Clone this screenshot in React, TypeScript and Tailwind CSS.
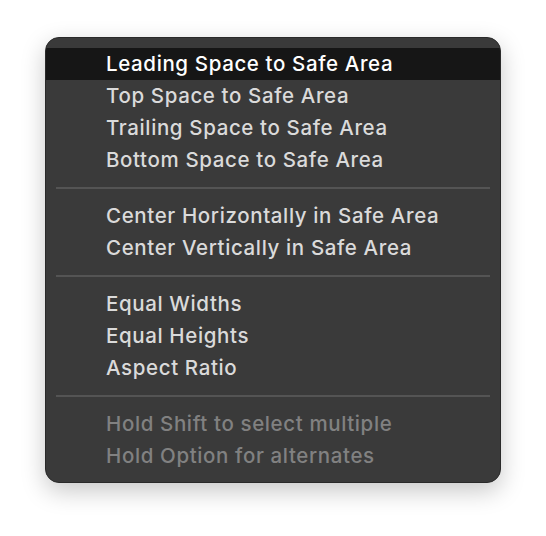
const groups: { label: string; active?: boolean; disabled?: boolean }[][] = [
  [
    { label: "Leading Space to Safe Area", active: true },
    { label: "Top Space to Safe Area" },
    { label: "Trailing Space to Safe Area" },
    { label: "Bottom Space to Safe Area" },
  ],
  [
    { label: "Center Horizontally in Safe Area" },
    { label: "Center Vertically in Safe Area" },
  ],
  [{ label: "Equal Widths" }, { label: "Equal Heights" }, { label: "Aspect Ratio" }],
  [
    { label: "Hold Shift to select multiple", disabled: true },
    { label: "Hold Option for alternates", disabled: true },
  ],
];

const App = () => {
  return (
    <div className="w-[546px] h-[536px] bg-white pt-[37px] pl-[45px]">
      <div
        className="w-[456px] rounded-[14px] bg-[#3a3a3a] border border-[#2a2a2a] pt-[10px] pb-[10px] shadow-[0_8px_24px_rgba(0,0,0,0.22)] overflow-hidden"
        style={{ fontFamily: "Inter, 'Liberation Sans', sans-serif" }}
      >
        {groups.map((group, gi) => (
          <div key={gi}>
            {gi > 0 && (
              <div className="h-[24px] flex items-center px-[10px]">
                <div className="h-[2px] w-full bg-[#545454]" />
              </div>
            )}
            {group.map((item) => (
              <div
                key={item.label}
                className={`h-[32px] flex items-center pl-[60px] text-[20.5px] font-medium tracking-[0.62px] ${
                  item.active
                    ? "bg-[#161616] text-white"
                    : item.disabled
                      ? "text-[#818181]"
                      : "text-[#dadada]"
                }`}
              >
                {item.label}
              </div>
            ))}
          </div>
        ))}
      </div>
    </div>
  );
};

export default App;
